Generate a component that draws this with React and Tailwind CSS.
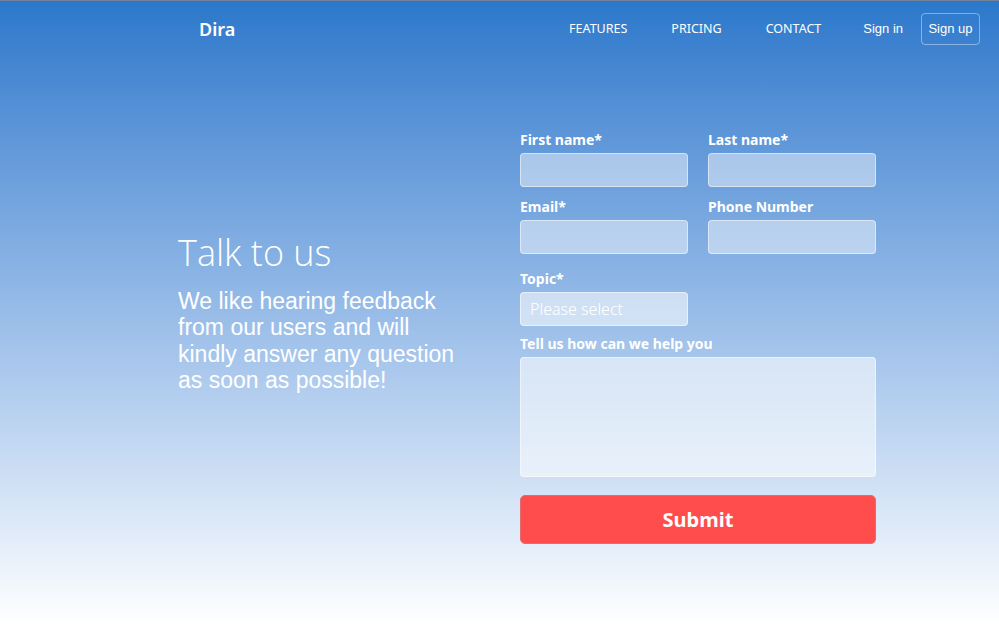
import React from 'react';

const navLinks = ['FEATURES', 'PRICING', 'CONTACT'];

function Field({ label, className = '', children }) {
  return (
    <div className={className}>
      <label className="block text-[14px] font-bold leading-[18px] text-white mb-[4px]">{label}</label>
      {children}
    </div>
  );
}

const inputCls =
  'block w-full h-[34px] rounded-[4px] border border-white/50 bg-white/45 px-[9px] text-[16px] text-white outline-none';

export default function App() {
  return (
    <div
      className="min-h-screen h-[624px] border-t border-[#71829a] bg-gradient-to-b from-[#2b78cb] to-white"
      style={{ fontFamily: '"Noto Sans", "Open Sans", sans-serif' }}
    >
      <nav className="flex items-center h-[56px] pl-[199px] pr-[19px]">
        <span className="text-[18px] font-semibold text-white">Dira</span>
        <div className="ml-auto flex items-center">
          {navLinks.map((l, i) => (
            <a
              key={l}
              href="#"
              className={`text-[12.5px] text-white ${i === 0 ? '' : 'ml-[44px]'}`}
            >
              {l}
            </a>
          ))}
          <a
            href="#"
            className="ml-[42px] text-[13px] text-white"
            style={{ fontFamily: '"Liberation Sans", Arial, sans-serif' }}
          >
            Sign in
          </a>
          <button
            className="ml-[18px] h-[32px] w-[59px] rounded-[4px] border border-white/40 text-[13px] text-white"
            style={{ fontFamily: '"Liberation Sans", Arial, sans-serif' }}
          >
            Sign up
          </button>
        </div>
      </nav>

      <div className="flex pl-[178px] pt-[74px]">
        <div className="w-[300px] pt-[100px]">
          <h1 className="text-[36px] font-light leading-[44px] text-white" style={{ fontFamily: '"Open Sans", sans-serif' }}>
            Talk to us
          </h1>
          <p
            className="mt-[13px] w-[286px] text-[23px] leading-[26.3px] text-white"
            style={{ fontFamily: '"Liberation Sans", Arial, sans-serif' }}
          >
            We like hearing feedback from our users and will kindly answer any question as soon as possible!
          </p>
        </div>

        <form className="ml-[42px] w-[356px]" onSubmit={(e) => e.preventDefault()}>
          <div className="grid grid-cols-2 gap-x-[20px] gap-y-[11px]">
            <Field label="First name*">
              <input className={inputCls} />
            </Field>
            <Field label="Last name*">
              <input className={inputCls} />
            </Field>
            <Field label="Email*">
              <input className={inputCls} />
            </Field>
            <Field label="Phone Number">
              <input className={inputCls} />
            </Field>
          </div>
          <Field label="Topic*" className="mt-[16px] w-[168px]">
            <div className={`${inputCls} flex items-center font-light bg-white/55`}>Please select</div>
          </Field>
          <Field label="Tell us how can we help you" className="mt-[9px]">
            <textarea className="block w-full h-[120px] rounded-[4px] border border-white/50 bg-white/55 resize-none outline-none" />
          </Field>
          <button className="mt-[18px] w-full h-[49px] rounded-[5px] border border-[#e46b6b] bg-[#ff4d4d] text-[20px] font-bold text-white">
            Submit
          </button>
        </form>
      </div>
    </div>
  );
}
